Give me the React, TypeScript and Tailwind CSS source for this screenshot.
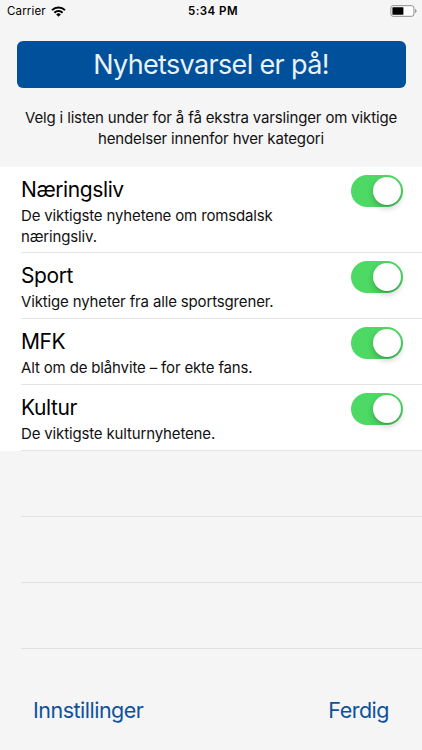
import React, { useState } from 'react';

const categories = [
  { name: 'Næringsliv', text: 'De viktigste nyhetene om romsdalsk næringsliv.', height: 'h-[86px]' },
  { name: 'Sport', text: 'Viktige nyheter fra alle sportsgrener.', height: 'h-[66px]' },
  { name: 'MFK', text: 'Alt om de blåhvite – for ekte fans.', height: 'h-[66px]' },
  { name: 'Kultur', text: 'De viktigste kulturnyhetene.', height: 'h-[66px]' },
];

const StatusBar: React.FC = () => (
  <div className="grid grid-cols-3 items-center h-[22px] pl-[7px] pr-[5px] text-[11.5px] leading-none text-black">
    <div className="flex items-center gap-[5px]">
      <span className="pt-[2px] tracking-[0.15px]">Carrier</span>
      <svg width="15" height="11" viewBox="0 0 15 11" fill="none" stroke="#000" strokeWidth="2">
        <path d="M1 4.1a9.4 9.4 0 0 1 13 0" />
        <path d="M3.4 6.7a5.9 5.9 0 0 1 8.2 0" />
        <path d="M7.5 10.7 5.2 8.4a3.3 3.3 0 0 1 4.6 0Z" fill="#000" stroke="none" />
      </svg>
    </div>
    <span className="pt-[2px] pl-[2px] text-center font-semibold tracking-[0.45px]">5:34 PM</span>
    <svg className="justify-self-end" width="27" height="12" viewBox="0 0 27 12">
      <rect x="0.9" y="0.7" width="23" height="10.6" rx="2.2" fill="#fff" stroke="#8c8c8c" />
      <rect x="2.4" y="2.2" width="11" height="7.6" rx="0.6" fill="#000" />
      <path d="M25.2 4v4c.8-.3 1.3-1 1.3-2s-.5-1.700-1.300-2Z" fill="#8c8c8c" />
    </svg>
  </div>
);

const Toggle: React.FC = () => {
  const [on, setOn] = useState(true);

  return (
    <button
      onClick={() => setOn(!on)}
      className={`flex items-center shrink-0 w-[52px] h-[32px] mt-[8px] px-[2px] rounded-full transition-colors ${on ? 'bg-[#4cd964] justify-end' : 'bg-[#e5e5ea] justify-start'}`}
    >
      <span className="w-[28px] h-[28px] rounded-full bg-white shadow-[0_3px_6px_rgba(0,0,0,0.22),0_1px_1px_rgba(0,0,0,0.12)]" />
    </button>
  );
};

const App: React.FC = () => {
  return (
    <div className="flex flex-col w-full h-[750px] bg-[#f5f5f5] text-[#111] font-['Inter',sans-serif] overflow-hidden">
      <StatusBar />

      {/* Header */}
      <div className="h-[145px] pt-[19px]">
        <button className="block w-[389px] h-[47px] mx-auto rounded-[6px] bg-[#00509b] text-[#e9f2fa] text-[27px] leading-[48px] tracking-[-0.65px]">
          Nyhetsvarsel er på!
        </button>
        <p className="mt-[20px] text-center text-[15px] leading-[20.5px] tracking-[-0.15px]">
          Velg i listen under for å få ekstra varslinger om viktige
          <br />
          hendelser innenfor hver kategori
        </p>
      </div>

      {/* Category list */}
      <div className="bg-white">
        {categories.map((cat) => (
          <div key={cat.name} className={`flex justify-between ml-[21px] pr-[19px] border-b border-[#e4e4e6] ${cat.height}`}>
            <div className="w-[290px] pt-[10px]">
              <h2 className="text-[21px] leading-[26px] tracking-[-0.4px] text-black">{cat.name}</h2>
              <p className="mt-[3px] text-[15px] leading-[20.5px] tracking-[-0.15px]">{cat.text}</p>
            </div>
            <Toggle />
          </div>
        ))}
      </div>
      <div className="h-[66px] ml-[21px] border-b border-[#e1e1e4]" />
      <div className="h-[66px] ml-[21px] border-b border-[#e1e1e4]" />
      <div className="h-[66px] ml-[21px] border-b border-[#e1e1e4]" />

      {/* Footer */}
      <div className="flex justify-between pt-[47px] pl-[33px] pr-[33px] text-[21.5px] leading-[28px] tracking-[-0.5px] text-[#0d529b]">
        <button>Innstillinger</button>
        <button>Ferdig</button>
      </div>
    </div>
  );
};

export default App;
